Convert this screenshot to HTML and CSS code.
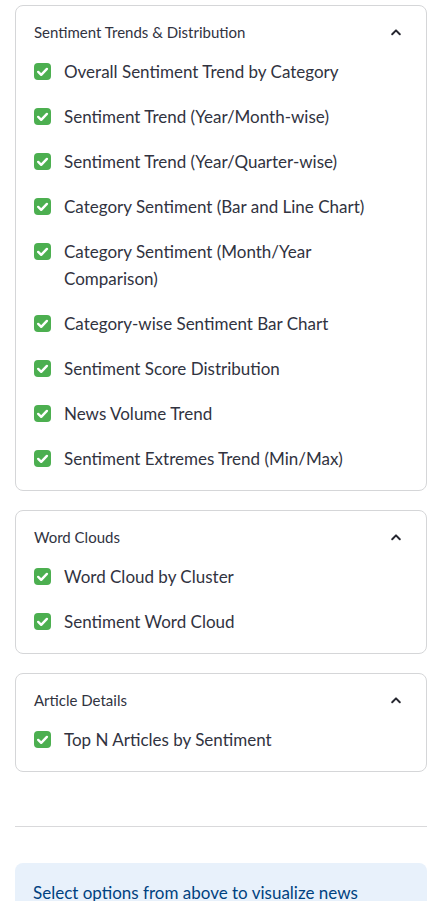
FILE: index.html
```html
<!DOCTYPE html>
<html>
<head>
<meta charset="utf-8">
<link rel="stylesheet" href="styles.css">
</head>
<body>
<div class="page">
  <section class="expander">
    <div class="exp-head">
      <span class="exp-title">Sentiment Trends &amp; Distribution</span>
      <svg class="chev" width="16" height="16" viewBox="0 0 16 16"><path d="M4.2 10.2 L8 6.4 L11.8 10.2" fill="none" stroke="#262730" stroke-width="2" stroke-linecap="round" stroke-linejoin="round"/></svg>
    </div>
    <div class="exp-body">
      <label class="cb"><span class="box"><svg viewBox="0 0 17 17" width="17" height="17"><path d="M4.2 8.9 L7.2 11.8 L12.9 5.9" fill="none" stroke="#fff" stroke-width="2.4" stroke-linecap="round" stroke-linejoin="round"/></svg></span><span class="lbl">Overall Sentiment Trend by Category</span></label>
      <label class="cb"><span class="box"><svg viewBox="0 0 17 17" width="17" height="17"><path d="M4.2 8.9 L7.2 11.8 L12.9 5.9" fill="none" stroke="#fff" stroke-width="2.4" stroke-linecap="round" stroke-linejoin="round"/></svg></span><span class="lbl">Sentiment Trend (Year/Month-wise)</span></label>
      <label class="cb"><span class="box"><svg viewBox="0 0 17 17" width="17" height="17"><path d="M4.2 8.9 L7.2 11.8 L12.9 5.9" fill="none" stroke="#fff" stroke-width="2.4" stroke-linecap="round" stroke-linejoin="round"/></svg></span><span class="lbl">Sentiment Trend (Year/Quarter-wise)</span></label>
      <label class="cb"><span class="box"><svg viewBox="0 0 17 17" width="17" height="17"><path d="M4.2 8.9 L7.2 11.8 L12.9 5.9" fill="none" stroke="#fff" stroke-width="2.4" stroke-linecap="round" stroke-linejoin="round"/></svg></span><span class="lbl">Category Sentiment (Bar and Line Chart)</span></label>
      <label class="cb"><span class="box"><svg viewBox="0 0 17 17" width="17" height="17"><path d="M4.2 8.9 L7.2 11.8 L12.9 5.9" fill="none" stroke="#fff" stroke-width="2.4" stroke-linecap="round" stroke-linejoin="round"/></svg></span><span class="lbl">Category Sentiment (Month/Year Comparison)</span></label>
      <label class="cb"><span class="box"><svg viewBox="0 0 17 17" width="17" height="17"><path d="M4.2 8.9 L7.2 11.8 L12.9 5.9" fill="none" stroke="#fff" stroke-width="2.4" stroke-linecap="round" stroke-linejoin="round"/></svg></span><span class="lbl">Category-wise Sentiment Bar Chart</span></label>
      <label class="cb"><span class="box"><svg viewBox="0 0 17 17" width="17" height="17"><path d="M4.2 8.9 L7.2 11.8 L12.9 5.9" fill="none" stroke="#fff" stroke-width="2.4" stroke-linecap="round" stroke-linejoin="round"/></svg></span><span class="lbl">Sentiment Score Distribution</span></label>
      <label class="cb"><span class="box"><svg viewBox="0 0 17 17" width="17" height="17"><path d="M4.2 8.9 L7.2 11.8 L12.9 5.9" fill="none" stroke="#fff" stroke-width="2.4" stroke-linecap="round" stroke-linejoin="round"/></svg></span><span class="lbl">News Volume Trend</span></label>
      <label class="cb"><span class="box"><svg viewBox="0 0 17 17" width="17" height="17"><path d="M4.2 8.9 L7.2 11.8 L12.9 5.9" fill="none" stroke="#fff" stroke-width="2.4" stroke-linecap="round" stroke-linejoin="round"/></svg></span><span class="lbl">Sentiment Extremes Trend (Min/Max)</span></label>
    </div>
  </section>

  <section class="expander">
    <div class="exp-head">
      <span class="exp-title">Word Clouds</span>
      <svg class="chev" width="16" height="16" viewBox="0 0 16 16"><path d="M4.2 10.2 L8 6.4 L11.8 10.2" fill="none" stroke="#262730" stroke-width="2" stroke-linecap="round" stroke-linejoin="round"/></svg>
    </div>
    <div class="exp-body">
      <label class="cb"><span class="box"><svg viewBox="0 0 17 17" width="17" height="17"><path d="M4.2 8.9 L7.2 11.8 L12.9 5.9" fill="none" stroke="#fff" stroke-width="2.4" stroke-linecap="round" stroke-linejoin="round"/></svg></span><span class="lbl">Word Cloud by Cluster</span></label>
      <label class="cb"><span class="box"><svg viewBox="0 0 17 17" width="17" height="17"><path d="M4.2 8.9 L7.2 11.8 L12.9 5.9" fill="none" stroke="#fff" stroke-width="2.4" stroke-linecap="round" stroke-linejoin="round"/></svg></span><span class="lbl">Sentiment Word Cloud</span></label>
    </div>
  </section>

  <section class="expander">
    <div class="exp-head">
      <span class="exp-title">Article Details</span>
      <svg class="chev" width="16" height="16" viewBox="0 0 16 16"><path d="M4.2 10.2 L8 6.4 L11.8 10.2" fill="none" stroke="#262730" stroke-width="2" stroke-linecap="round" stroke-linejoin="round"/></svg>
    </div>
    <div class="exp-body">
      <label class="cb"><span class="box"><svg viewBox="0 0 17 17" width="17" height="17"><path d="M4.2 8.9 L7.2 11.8 L12.9 5.9" fill="none" stroke="#fff" stroke-width="2.4" stroke-linecap="round" stroke-linejoin="round"/></svg></span><span class="lbl">Top N Articles by Sentiment</span></label>
    </div>
  </section>

  <hr class="divider">

  <div class="info">Select options from above to visualize news</div>
</div>
</body>
</html>
```

FILE: styles.css
```css
html, body {
  margin: 0;
  padding: 0;
  background: #ffffff;
  overflow: hidden;
}
body {
  font-family: "Lato", "Noto Sans", sans-serif;
  color: #31333f;
}
.page {
  width: 412px;
  margin-left: 15px;
  padding-top: 5px;
  display: flex;
  flex-direction: column;
}
.expander {
  border: 1px solid #d5d6d8;
  border-radius: 8px;
  margin-bottom: 19.5px;
}
.exp-head {
  display: flex;
  align-items: center;
  justify-content: space-between;
  padding: 16px 22px 0 18px;
  height: 20px;
  font-size: 15px;
  line-height: 20px;
}
.chev {
  display: block;
}
.exp-body {
  padding: 15.5px 18px 18px 18px;
  display: flex;
  flex-direction: column;
  gap: 18px;
}
.cb {
  display: flex;
  align-items: flex-start;
  gap: 13px;
  font-size: 17px;
  line-height: 27px;
}
.box {
  flex: 0 0 17px;
  width: 17px;
  height: 17px;
  margin-top: 5px;
  background: #4caf50;
  border-radius: 4px;
  display: flex;
}
.lbl {
  max-width: 315px;
}
.divider {
  border: 0;
  border-top: 1px solid #d9d9db;
  margin: 35px 0 36px 0;
}
.info {
  background: #e8f1fb;
  border-radius: 8px;
  color: #004280;
  font-size: 17px;
  line-height: 27px;
  padding: 16px 18px;
}
```
